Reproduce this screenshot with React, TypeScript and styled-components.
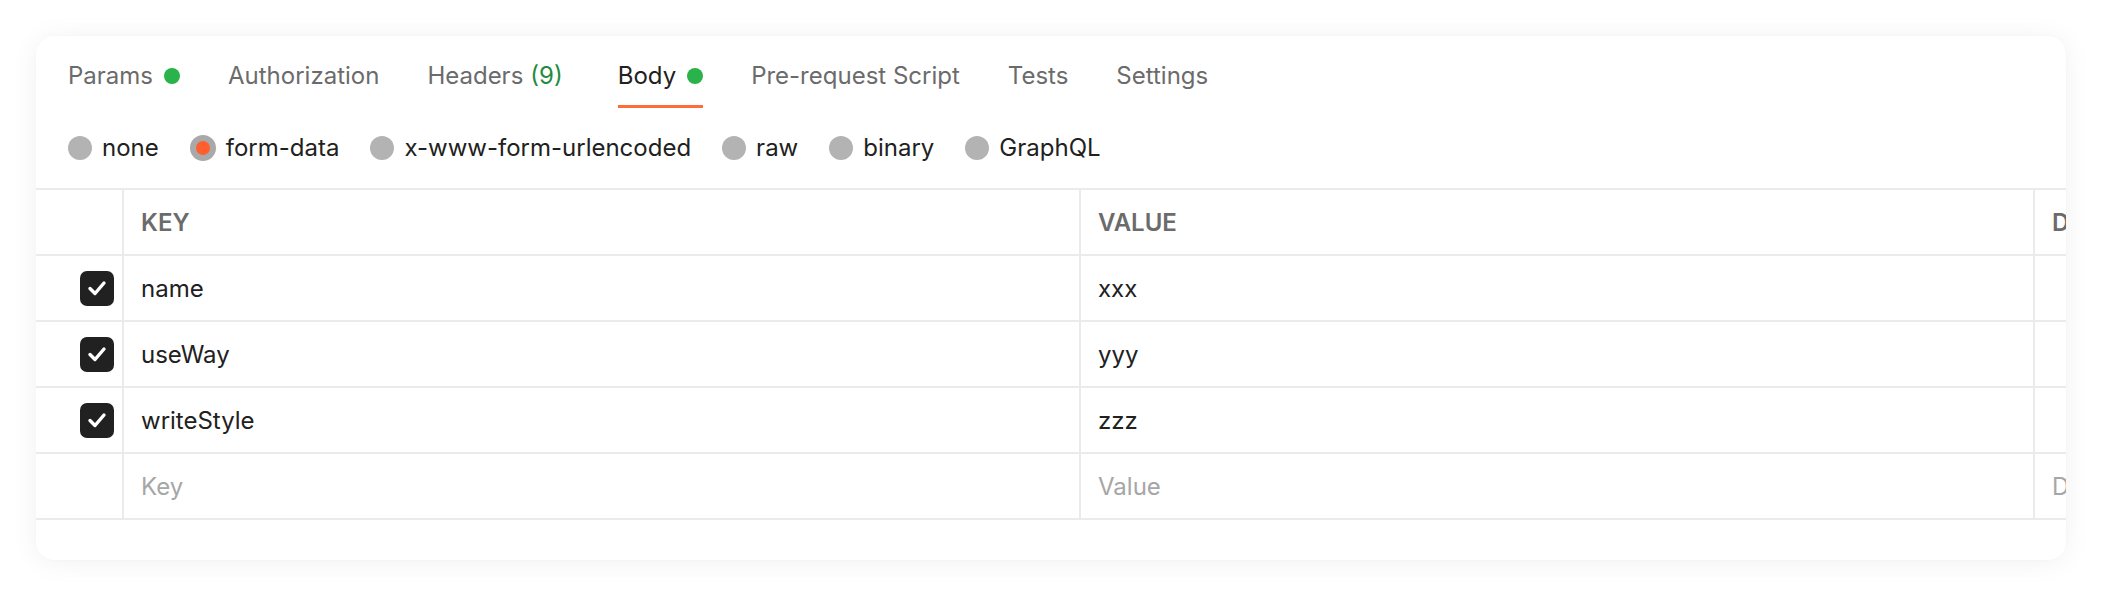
import React from 'react';
import styled, { createGlobalStyle } from 'styled-components';

const GlobalStyle = createGlobalStyle`
    html, body {
        margin: 0;
        padding: 0;
        background: #ffffff;
    }
    body {
        font-family: Inter, "Noto Sans", "Liberation Sans", sans-serif;
        color: #212121;
        -webkit-font-smoothing: antialiased;
    }
`;

const Page = styled.div`
    padding: 36px 0 0 36px;
    height: 598px;
    box-sizing: border-box;
`;

const Card = styled.div`
    width: 2030px;
    height: 524px;
    background: #ffffff;
    border-radius: 18px;
    box-shadow: 0 2px 28px rgba(0, 0, 0, 0.06), 0 0 2px rgba(0, 0, 0, 0.03);
    overflow: hidden;
    display: flex;
    flex-direction: column;
`;

const TabBar = styled.div`
    display: flex;
    gap: 48px;
    padding: 24px 32px 0;
`;

const Tab = styled.div<{ $active?: boolean }>`
    display: flex;
    align-items: center;
    gap: 11px;
    font-size: 24px;
    line-height: 32px;
    padding-bottom: 13px;
    color: ${p => (p.$active ? '#212121' : '#6b6b6b')};
    border-bottom: 3px solid ${p => (p.$active ? '#ff6c37' : 'transparent')};
`;

const Dot = styled.span`
    width: 16px;
    height: 16px;
    border-radius: 50%;
    background: #2ab24b;
`;

const Count = styled.span`
    color: #1f8c40;
    margin-left: -4px;
    margin-right: 7px;
`;

const RadioRow = styled.div`
    display: flex;
    align-items: center;
    gap: 31px;
    padding: 24px 32px 24px;
`;

const RadioItem = styled.label`
    display: flex;
    align-items: center;
    gap: 10px;
    font-size: 24px;
    line-height: 32px;
    color: #212121;
`;

const RadioMark = styled.span<{ $checked?: boolean }>`
    box-sizing: border-box;
    width: ${p => (p.$checked ? 26 : 24)}px;
    height: ${p => (p.$checked ? 26 : 24)}px;
    border-radius: 50%;
    background: ${p => (p.$checked ? '#ff5f2e' : '#b3b3b3')};
    border: ${p => (p.$checked ? '6px solid #a9a9a9' : 'none')};
`;

const Table = styled.div`
    border-top: 2px solid #ebebeb;
    width: 2400px;
`;

const Row = styled.div`
    display: grid;
    grid-template-columns: 88px 957px 954px 401px;
    height: 66px;
    border-bottom: 2px solid #ebebeb;
    box-sizing: border-box;
`;

const Cell = styled.div<{ $tone?: 'head' | 'body' | 'hint' }>`
    display: flex;
    align-items: center;
    padding-left: 17px;
    border-right: 2px solid #ebebeb;
    font-size: 24px;
    white-space: nowrap;
    overflow: hidden;
    font-weight: ${p => (p.$tone === 'head' ? 600 : 400)};
    color: ${p => (p.$tone === 'head' ? '#6b6b6b' : p.$tone === 'hint' ? '#a6a6a6' : '#212121')};
`;

const CheckCell = styled.div`
    display: flex;
    align-items: center;
    justify-content: flex-end;
    padding-right: 8px;
    border-right: 2px solid #ebebeb;
`;

const CheckBox = styled.span`
    width: 34px;
    height: 35px;
    border-radius: 7px;
    background: #212121;
    display: flex;
    align-items: center;
    justify-content: center;
`;

const Check = () => (
    <CheckBox>
        <svg width="22" height="22" viewBox="0 0 22 22">
            <path d="M4 11.5 L9 16.5 L18 6" fill="none" stroke="#fff" strokeWidth="3.4" strokeLinecap="round" strokeLinejoin="round" />
        </svg>
    </CheckBox>
);

const tabs = ['Params', 'Authorization', 'Headers', 'Body', 'Pre-request Script', 'Tests', 'Settings'];
const modes = ['none', 'form-data', 'x-www-form-urlencoded', 'raw', 'binary', 'GraphQL'];
const rows = [
    { key: 'name', value: 'xxx' },
    { key: 'useWay', value: 'yyy' },
    { key: 'writeStyle', value: 'zzz' },
];

const App = () => (
    <>
        <GlobalStyle />
        <Page>
            <Card>
                <TabBar>
                    {tabs.map(tab => (
                        <Tab key={tab} $active={tab === 'Body'}>
                            {tab}
                            {tab === 'Headers' && <Count>(9)</Count>}
                            {(tab === 'Params' || tab === 'Body') && <Dot />}
                        </Tab>
                    ))}
                </TabBar>
                <RadioRow>
                    {modes.map(mode => (
                        <RadioItem key={mode}>
                            <RadioMark $checked={mode === 'form-data'} />
                            {mode}
                        </RadioItem>
                    ))}
                </RadioRow>
                <Table>
                    <Row>
                        <CheckCell />
                        <Cell $tone="head">KEY</Cell>
                        <Cell $tone="head">VALUE</Cell>
                        <Cell $tone="head">DESCRIPTION</Cell>
                    </Row>
                    {rows.map(row => (
                        <Row key={row.key}>
                            <CheckCell>
                                <Check />
                            </CheckCell>
                            <Cell>{row.key}</Cell>
                            <Cell>{row.value}</Cell>
                            <Cell />
                        </Row>
                    ))}
                    <Row>
                        <CheckCell />
                        <Cell $tone="hint">Key</Cell>
                        <Cell $tone="hint">Value</Cell>
                        <Cell $tone="hint">Description</Cell>
                    </Row>
                </Table>
            </Card>
        </Page>
    </>
);

export default App;
